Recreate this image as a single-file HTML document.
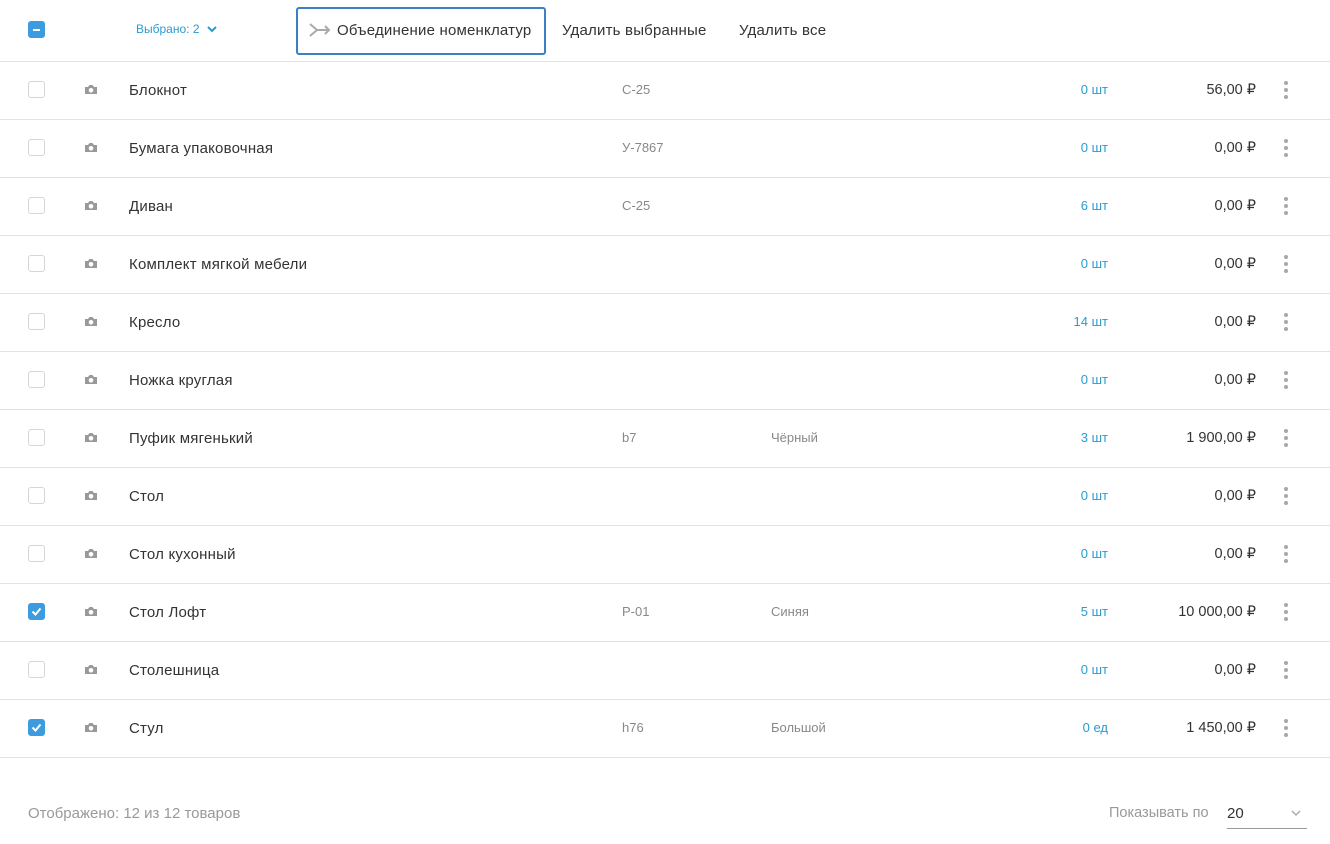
<!DOCTYPE html><html><head><meta charset="utf-8"><style>
body{margin:0;width:1330px;height:844px;background:#fff;font-family:"Liberation Sans",sans-serif;color:#333;position:relative;overflow:hidden}
.a{position:absolute}
.cb{position:absolute;left:28px;width:17px;height:17px;border:1px solid #d6d6d6;border-radius:3px;box-sizing:border-box}
.cb.on{background:#3d9be0;border-color:#3d9be0}
.row{position:absolute;left:0;width:1330px;height:58px;border-bottom:1px solid #e3e3e3;box-sizing:border-box}
.row>*{position:absolute;top:0;line-height:57px}
.nm{left:129px;font-size:15px;letter-spacing:0.2px;color:#333}
.cd{left:622px;font-size:13px;color:#888;line-height:56px!important}
.cl{left:771px;font-size:13px;color:#888;line-height:56px!important}
.q{right:222px;font-size:13px;color:#2a9bd0;line-height:56px!important}
.p{right:74px;font-size:14.5px;color:#333}
.dots{left:1284px;top:19px!important;line-height:0!important}
.dots i{display:block;width:4px;height:4px;border-radius:2px;background:#a8a8a8;margin-bottom:3px}
.cam{left:84px;top:22px!important;line-height:0!important}
</style></head><body>
<div class="a" style="left:0;top:0;width:1330px;height:62px;border-bottom:1px solid #e3e3e3;box-sizing:border-box"></div>
<div class="cb on" style="top:21px"><div style="position:absolute;left:4px;top:7px;width:7px;height:2px;background:#fff"></div></div>
<div class="a" style="left:136px;top:22px;font-size:12px;color:#2a9bd0">Выбрано: 2 <svg width="10" height="8" viewBox="0 0 10 8" style="margin-left:4px"><path d="M1 2l4 4 4-4" stroke="#2a9bd0" stroke-width="2" fill="none"/></svg></div>
<div class="a" style="left:296px;top:7px;width:250px;height:48px;border:2px solid #3b7fc4;border-radius:3px;box-sizing:border-box"></div>
<svg class="a" style="left:309px;top:22px" width="22" height="16" viewBox="0 0 22 16"><path d="M1 2l7 6-7 6M8 8h12M16 4l4 4-4 4" stroke="#aaa" stroke-width="2" fill="none"/></svg>
<div class="a" style="left:337px;top:22px;font-size:15px;letter-spacing:0.2px;color:#333">Объединение номенклатур</div>
<div class="a" style="left:562px;top:22px;font-size:15px;letter-spacing:0.2px;color:#333">Удалить выбранные</div>
<div class="a" style="left:739px;top:22px;font-size:15px;letter-spacing:0.2px;color:#333">Удалить все</div>
<div id="rows"></div>
<div class="a" style="left:28px;top:805px;font-size:15px;color:#999">Отображено: 12 из 12 товаров</div>
<div class="a" style="left:1109px;top:805px;font-size:14.5px;color:#999">Показывать по</div>
<div class="a" style="left:1227px;top:805px;font-size:15px;color:#333">20</div>
<svg class="a" style="left:1291px;top:809px" width="10" height="8" viewBox="0 0 10 8"><path d="M1 2l4 4 4-4" stroke="#aaa" stroke-width="1.5" fill="none"/></svg>
<div class="a" style="left:1227px;top:828px;width:80px;height:1px;background:#999"></div>
<script>
var d=[["Блокнот","С-25","","0 шт","56,00 ₽"],["Бумага упаковочная","У-7867","","0 шт","0,00 ₽"],["Диван","С-25","","6 шт","0,00 ₽"],["Комплект мягкой мебели","","","0 шт","0,00 ₽"],["Кресло","","","14 шт","0,00 ₽"],["Ножка круглая","","","0 шт","0,00 ₽"],["Пуфик мягенький","b7","Чёрный","3 шт","1 900,00 ₽"],["Стол","","","0 шт","0,00 ₽"],["Стол кухонный","","","0 шт","0,00 ₽"],["Стол Лофт","Р-01","Синяя","5 шт","10 000,00 ₽",1],["Столешница","","","0 шт","0,00 ₽"],["Стул","h76","Большой","0 ед","1 450,00 ₽",1]];
var h="";d.forEach(function(r,i){var t=62+i*58;
h+='<div class="row" style="top:'+t+'px"><div class="cb'+(r[5]?' on':'')+'" style="top:19px">'+(r[5]?'<svg width="15" height="15" viewBox="0 0 15 15" style="position:absolute;left:0;top:0"><path d="M3.5 7.5l3 3 5-6" stroke="#fff" stroke-width="2" fill="none"/></svg>':'')+'</div>'+
'<svg class="cam" width="14" height="11" viewBox="0 0 14 11"><path d="M1 3h3l1.5-2h3L10 3h3v7H1z" fill="#999"/><circle cx="7" cy="6.3" r="2.3" fill="#fff"/></svg>'+
'<span class="nm">'+r[0]+'</span><span class="cd">'+r[1]+'</span><span class="cl">'+r[2]+'</span><span class="q">'+r[3]+'</span><span class="p">'+r[4]+'</span><span class="dots"><i></i><i></i><i></i></span></div>';});
document.getElementById("rows").innerHTML=h;
</script>
</body></html>
